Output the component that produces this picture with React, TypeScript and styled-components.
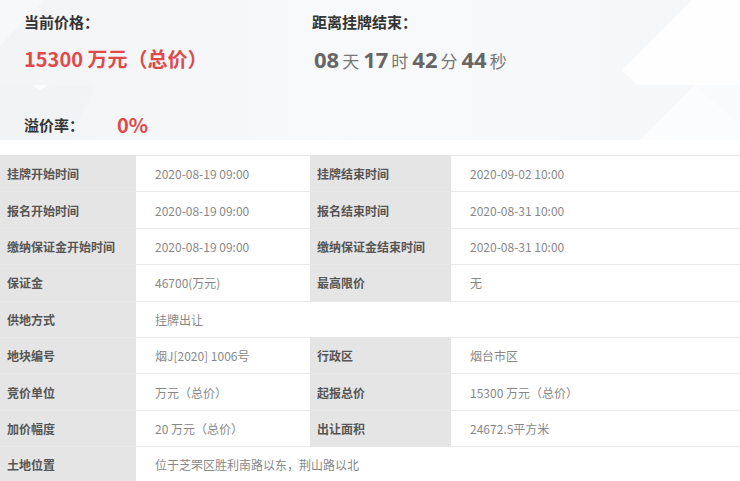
import React from "react";
import styled, { createGlobalStyle } from "styled-components";

const GlobalStyle = createGlobalStyle`
  body {
    margin: 0;
    background: #fff;
    font-family: "Noto Sans CJK SC", "Liberation Sans", sans-serif;
  }
`;

const Page = styled.div`
  width: 740px;
  overflow: hidden;
`;

const Header = styled.div`
  position: relative;
  height: 140px;
  background: linear-gradient(90deg, #f3f4f6 0%, #f8f9fa 45%, #f6f7f9 100%);
`;

const Deco = styled.svg`
  position: absolute;
  left: 0;
  top: 0;
`;

const HeaderGrid = styled.div`
  position: relative;
  display: grid;
  grid-template-columns: 288px 1fr;
  padding: 13px 0 0 24px;
`;

const Block = styled.div`
  display: flex;
  flex-direction: column;
  gap: 16px;
`;

const Title = styled.div`
  font-size: 15px;
  line-height: 18px;
  font-weight: bold;
  color: #333;
`;

const Price = styled.div`
  font-size: 20px;
  line-height: 24px;
  font-weight: bold;
  color: #e04a4a;
`;

const Countdown = styled.div`
  display: flex;
  align-items: baseline;
  padding-left: 2px;
  color: #666;
  height: 24px;
`;

const Num = styled.span`
  font-size: 22px;
  line-height: 24px;
  font-weight: bold;
  font-family: "Open Sans", "Noto Sans CJK SC", sans-serif;
`;

const Unit = styled.span`
  font-size: 17px;
  color: #777;
  margin: 0 4px 0 3px;
`;

const RateRow = styled.div`
  position: relative;
  display: flex;
  align-items: center;
  margin-top: 42px;
  padding-left: 24px;
  height: 24px;
`;

const RateLabel = styled(Title)`
  width: 93px;
`;

const RateValue = styled(Price)`
  font-size: 20px;
`;

const Table = styled.table`
  margin-top: 15px;
  width: 740px;
  border-collapse: collapse;
  table-layout: fixed;
  border-top: 1px solid #e4e4e4;
`;

const Cell = styled.td<{ $label?: boolean }>`
  height: 35.4px;
  padding: 0 0 0 ${(p) => (p.$label ? "7px" : "19px")};
  border-bottom: 1px solid #e8e8e8;
  background: ${(p) => (p.$label ? "#e5e5e5" : "#fff")};
  color: ${(p) => (p.$label ? "#555" : "#888")};
  font-size: 12px;
  font-weight: ${(p) => (p.$label ? "bold" : "normal")};
  white-space: nowrap;
  vertical-align: middle;
`;

type Row = [string, string, string?, string?];

const rows: Row[] = [
  ["挂牌开始时间", "2020-08-19 09:00", "挂牌结束时间", "2020-09-02 10:00"],
  ["报名开始时间", "2020-08-19 09:00", "报名结束时间", "2020-08-31 10:00"],
  ["缴纳保证金开始时间", "2020-08-19 09:00", "缴纳保证金结束时间", "2020-08-31 10:00"],
  ["保证金", "46700(万元)", "最高限价", "无"],
  ["供地方式", "挂牌出让"],
  ["地块编号", "烟J[2020] 1006号", "行政区", "烟台市区"],
  ["竞价单位", "万元（总价）", "起报总价", "15300 万元（总价）"],
  ["加价幅度", "20 万元（总价）", "出让面积", "24672.5平方米"],
  ["土地位置", "位于芝罘区胜利南路以东，荆山路以北"],
];

export default function App() {
  return (
    <Page>
      <GlobalStyle />
      <Header>
        <Deco width="740" height="140" viewBox="0 0 740 140">
          <polygon points="0,46 44,0 0,0" fill="#fff" opacity="0.35" />
          <polygon points="0,140 0,85 95,85 70,140" fill="#f0f1f3" opacity="0.5" />
          <polygon points="33,85 47,85 40,91" fill="#fff" opacity="0.8" />
          <polygon points="622,70 692,0 740,0 740,85 637,85" fill="#fff" opacity="0.85" />
          <polygon points="640,140 695,85 740,125 740,140" fill="#fff" opacity="0.6" />
          <polygon points="695,85 740,85 740,125" fill="#fff" opacity="0.4" />
        </Deco>
        <HeaderGrid>
          <Block>
            <Title>当前价格：</Title>
            <Price>15300 万元（总价）</Price>
          </Block>
          <Block>
            <Title>距离挂牌结束：</Title>
            <Countdown>
              <Num>08</Num>
              <Unit>天</Unit>
              <Num>17</Num>
              <Unit>时</Unit>
              <Num>42</Num>
              <Unit>分</Unit>
              <Num>44</Num>
              <Unit>秒</Unit>
            </Countdown>
          </Block>
        </HeaderGrid>
        <RateRow>
          <RateLabel>溢价率：</RateLabel>
          <RateValue>0%</RateValue>
        </RateRow>
      </Header>
      <Table>
        <colgroup>
          <col style={{ width: 136 }} />
          <col style={{ width: 174 }} />
          <col style={{ width: 141 }} />
          <col />
        </colgroup>
        <tbody>
          {rows.map((r) => (
            <tr key={r[0]}>
              <Cell $label>{r[0]}</Cell>
              {r[2] !== undefined ? (
                <>
                  <Cell>{r[1]}</Cell>
                  <Cell $label>{r[2]}</Cell>
                  <Cell>{r[3]}</Cell>
                </>
              ) : (
                <Cell colSpan={3}>{r[1]}</Cell>
              )}
            </tr>
          ))}
        </tbody>
      </Table>
    </Page>
  );
}
